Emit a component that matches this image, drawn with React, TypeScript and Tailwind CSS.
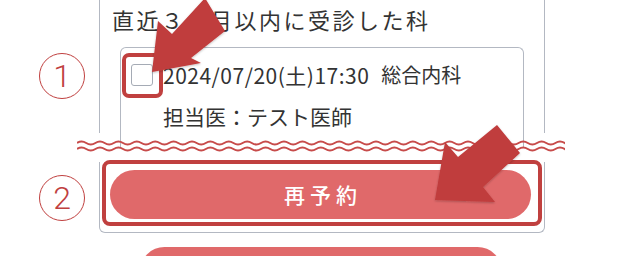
import React from "react";

const jp = { fontFamily: '"Noto Sans CJK JP", "Noto Sans", sans-serif' };

function wavePath(y: number, width: number) {
  const period = 18.4;
  const amp = 3;
  let d = `M0 ${y} q${period / 4} ${-amp} ${period / 2} 0`;
  const n = Math.ceil(width / (period / 2));
  for (let i = 0; i < n; i++) d += ` t${period / 2} 0`;
  return d;
}

function Circled({ n }: { n: string }) {
  return (
    <div className="w-[46px] h-[46px] rounded-full border-[1.5px] border-[#c0403f] flex items-center justify-center text-[#c0403f] text-[32px] font-light leading-none" style={{ fontFamily: "Roboto, sans-serif" }}>
      {n}
    </div>
  );
}

export default function App() {
  return (
    <div className="relative w-[640px] h-[256px] overflow-hidden bg-white text-[#333]" style={jp}>
      {/* 上部：受診した科 */}
      <div className="flex h-[133px]">
        <div className="w-[99px] shrink-0 pl-[39px] pt-[53px]">
          <Circled n="1" />
        </div>
        <div className="w-[446px] border-x border-[#b3b8c2] pt-[4px]">
          <h2 className="pl-[12px] text-[22px] leading-[30px] tracking-[2.5px]">
            直近３ヶ月以内に受診した科
          </h2>
          <div className="mt-[13px] mx-[20px] border border-b-0 border-[#b3b8c2] rounded-t-md pl-[10px] pt-[15px] h-[100px]">
            <div className="flex items-center">
              <div className="relative w-[22px] h-[22px] shrink-0">
                <div className="w-full h-full rounded-[3px] border border-[#a5abb5] bg-white" />
                <div className="absolute left-[-9px] top-[-11px] w-[41px] h-[45px] border-4 border-[#c0403f] rounded-[7px]" />
              </div>
              <span className="ml-[10px] text-[21px] leading-[24px] tracking-[0.5px]">
                2024/07/20(土)17:30
              </span>
              <span className="ml-[12px] text-[20px] leading-[24px]">総合内科</span>
            </div>
            <div className="pl-[32px] mt-[17px] text-[21px] leading-[24px]">担当医：テスト医師</div>
          </div>
        </div>
      </div>

      {/* 省略線 */}
      <div className="h-[29px] pl-[77px]">
        <svg width="488" height="29" viewBox="0 0 488 29">
          <path d={wavePath(10, 488)} fill="none" stroke="#c74b4a" strokeWidth="2" />
          <path d={wavePath(16, 488)} fill="none" stroke="#c74b4a" strokeWidth="2" />
        </svg>
      </div>

      {/* 下部：再予約ボタン */}
      <div className="flex">
        <div className="w-[99px] shrink-0 pl-[39px] pt-[13px]">
          <Circled n="2" />
        </div>
        <div className="w-[446px] h-[71px] border-x border-b border-[#b3b8c2] rounded-b-md">
          <div className="-mt-[2px] ml-[2px] w-[440px] border-4 border-[#c0403f] rounded-lg pl-[4px] pr-[7px] pt-[6px] pb-[3px]">
            <button className="w-full h-[49px] rounded-full bg-[#e0696a] text-white text-[21px] tracking-[5px] pl-[5px] font-medium">
              再予約
            </button>
          </div>
        </div>
      </div>

      <div className="mt-[14px] ml-[140px] w-[362px] h-[49px] rounded-full bg-[#e0696a]" />

      {/* 注釈の矢印 */}
      <svg className="absolute inset-0 pointer-events-none" width="640" height="256" viewBox="0 0 640 256">
        <defs>
          <filter id="sh" x="-20%" y="-20%" width="140%" height="140%">
            <feDropShadow dx="0" dy="1" stdDeviation="1" floodColor="#000" floodOpacity="0.25" />
          </filter>
        </defs>
        <polygon points="152,72 158,21 172,34 205,-2 225,31 191,58 201,63" fill="#c03c3c" filter="url(#sh)" />
        <polygon points="435,200 445,142 458,157 497,125 520,153 483,187 495,202" fill="#c03c3c" filter="url(#sh)" />
      </svg>
    </div>
  );
}
